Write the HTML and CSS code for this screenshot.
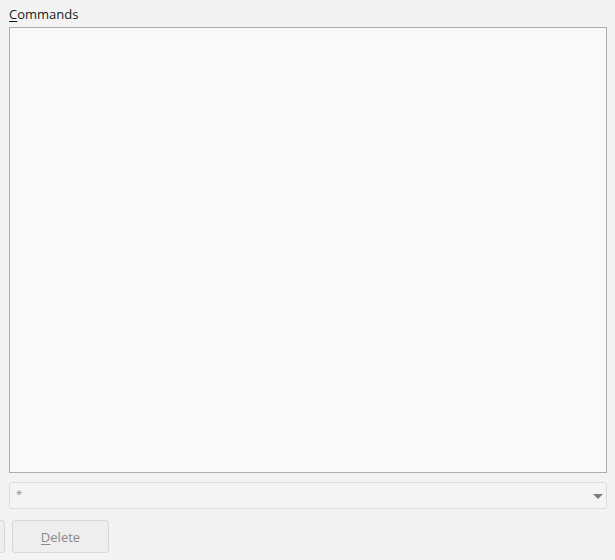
FILE: index.html
```html
<!DOCTYPE html>
<html lang="en">
<head>
<meta charset="UTF-8">
<title>Commands</title>
<link rel="stylesheet" href="styles.css">
</head>
<body>
<div class="panel">
    <label class="caption"><u>C</u>ommands</label>
    <div class="listbox"></div>
    <div class="combo">
        <span class="combo-text">*</span>
        <span class="combo-arrow"></span>
    </div>
    <div class="buttons">
        <button class="btn" disabled></button>
        <button class="btn" disabled><u>D</u>elete</button>
    </div>
</div>
</body>
</html>
```

FILE: styles.css
```css
/* Basic styling */
body {
    margin: 0;
    background: #f3f3f3;
    font-family: "Open Sans", "Noto Sans", sans-serif;
    font-size: 12px;
    color: #1a1a1a;
    overflow: hidden;
}
.panel {
    padding: 5px 8px 0 9px;
}
.caption {
    display: block;
    height: 22px;
    line-height: 18px;
    font-size: 13px;
}
.caption u {
    text-underline-offset: 2px;
}
.listbox {
    height: 444px;
    border: 1px solid #acacac;
    background: #f9f9f9;
}
.combo {
    margin-top: 9px;
    height: 25px;
    border: 1px solid #dcdcdc;
    border-radius: 3px;
    background: #f4f4f4;
    display: flex;
    align-items: center;
    justify-content: space-between;
    padding: 0 3px 0 6px;
}
.combo-text {
    color: #8c8c8c;
    font-size: 11px;
    margin-top: -4px;
}
.combo-arrow {
    width: 0;
    height: 0;
    border-left: 5px solid transparent;
    border-right: 5px solid transparent;
    border-top: 5px solid #7d7d7d;
    margin-top: 1px;
}
.buttons {
    display: flex;
    gap: 7px;
    margin-top: 11px;
    margin-left: -101px;
}
.btn {
    width: 97px;
    height: 33px;
    border: 1px solid #d8d8d8;
    border-radius: 3px;
    background: #eeeeee;
    color: #8a8a8a;
    font-family: inherit;
    font-size: 13px;
    padding: 0;
}
.btn u {
    text-underline-offset: 2px;
}
```
